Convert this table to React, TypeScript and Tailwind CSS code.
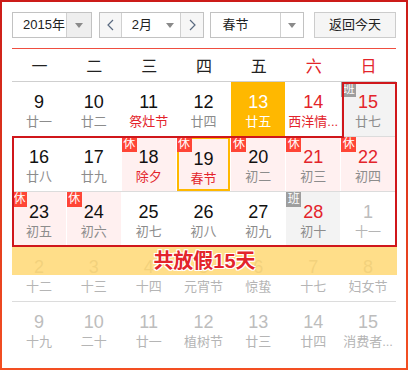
import React from "react";

type Day = {
  n: number;
  l: string;
  red?: boolean;
  lunarRed?: boolean;
  badge?: "休" | "班";
  bg?: "pink" | "gray" | "today";
  selected?: boolean;
  other?: boolean;
};

const weeks: Day[][] = [
  [
    { n: 9, l: "廿一" },
    { n: 10, l: "廿二" },
    { n: 11, l: "祭灶节", lunarRed: true },
    { n: 12, l: "廿四" },
    { n: 13, l: "廿五", bg: "today" },
    { n: 14, l: "西洋情...", red: true, lunarRed: true },
    { n: 15, l: "廿七", red: true, badge: "班", bg: "gray" },
  ],
  [
    { n: 16, l: "廿八" },
    { n: 17, l: "廿九" },
    { n: 18, l: "除夕", lunarRed: true, badge: "休", bg: "pink" },
    { n: 19, l: "春节", lunarRed: true, badge: "休", bg: "pink", selected: true },
    { n: 20, l: "初二", badge: "休", bg: "pink" },
    { n: 21, l: "初三", red: true, badge: "休", bg: "pink" },
    { n: 22, l: "初四", red: true, badge: "休", bg: "pink" },
  ],
  [
    { n: 23, l: "初五", badge: "休", bg: "pink" },
    { n: 24, l: "初六", badge: "休", bg: "pink" },
    { n: 25, l: "初七" },
    { n: 26, l: "初八" },
    { n: 27, l: "初九" },
    { n: 28, l: "初十", red: true, badge: "班", bg: "gray" },
    { n: 1, l: "十一", other: true },
  ],
  [
    { n: 2, l: "十二", other: true },
    { n: 3, l: "十三", other: true },
    { n: 4, l: "十四", other: true },
    { n: 5, l: "元宵节", other: true },
    { n: 6, l: "惊蛰", other: true },
    { n: 7, l: "十七", other: true },
    { n: 8, l: "妇女节", other: true },
  ],
  [
    { n: 9, l: "十九", other: true },
    { n: 10, l: "二十", other: true },
    { n: 11, l: "廿一", other: true },
    { n: 12, l: "植树节", other: true },
    { n: 13, l: "廿三", other: true },
    { n: 14, l: "廿四", other: true },
    { n: 15, l: "消费者...", other: true },
  ],
];

const heads = ["一", "二", "三", "四", "五", "六", "日"];

function Tri() {
  return <span className="w-0 h-0 border-l-[4px] border-r-[4px] border-t-[5px] border-l-transparent border-r-transparent border-t-[#8a8a8a]" />;
}

function Chevron({ right }: { right?: boolean }) {
  return (
    <svg width="7" height="12" viewBox="0 0 7 12">
      <polyline
        points={right ? "1,1 6,6 1,11" : "6,1 1,6 6,11"}
        fill="none"
        stroke="#5a6a80"
        strokeWidth="1.2"
      />
    </svg>
  );
}

function Cell({ d }: { d: Day }) {
  let bg = "";
  if (d.bg === "pink") bg = "bg-[#fff0f0]";
  if (d.bg === "gray") bg = "bg-[#f3f3f3]";
  if (d.bg === "today") bg = "bg-[#ffb800]";
  const numColor = d.bg === "today" ? "text-white" : d.other ? "text-[#bdbdbd]" : d.red ? "text-[#e3242b]" : "text-[#111]";
  const lunarColor = d.bg === "today" ? "text-white" : d.other ? "text-[#b5b5b5]" : d.lunarRed ? "text-[#e3242b]" : "text-[#8c8c8c]";
  return (
    <div className="pr-[1px] h-full">
      <div className={`relative h-full flex flex-col items-center pt-[10px] ${bg} ${d.selected ? "border-2 border-[#ffb800] pt-[8px]" : ""}`}>
        {d.badge && (
          <span
            className={`absolute ${d.selected ? "-top-[2px] -left-[2px]" : "top-0 left-0"} w-[15px] h-[15px] text-[12px] leading-[15px] text-center text-white ${d.badge === "休" ? "bg-[#ff4536]" : "bg-[#9e9e9e]"}`}
          >
            {d.badge}
          </span>
        )}
        <span className={`text-[18px] leading-[20px] ${numColor}`}>{d.n}</span>
        <span className={`mt-[2px] text-[13px] leading-[16px] whitespace-nowrap ${lunarColor}`}>{d.l}</span>
      </div>
    </div>
  );
}

export default function App() {
  return (
    <div
      className="w-[408px] h-[370px] p-[2px] bg-gradient-to-b from-[#cc1b19] to-[#f34f22]"
      style={{ fontFamily: '"Liberation Sans", "Noto Sans CJK SC", sans-serif' }}
    >
      <div className="bg-white h-full px-[10px] pt-[10px]">
        <div className="flex h-[26px] text-[13px] text-[#222] whitespace-nowrap">
          <div className="w-[80px] flex border border-[#c2c2c2]">
            <div className="flex-1 flex items-center pl-[10px]">2015年</div>
            <div className="w-[25px] flex items-center justify-center bg-[#eeeeee] border-l border-[#d0d0d0]">
              <Tri />
            </div>
          </div>
          <div className="w-[106px] ml-[7px] flex border border-[#c2c2c2]">
            <div className="w-[22px] flex items-center justify-center bg-[#f6f6f6] border-r border-[#d0d0d0]">
              <Chevron />
            </div>
            <div className="flex-1 flex items-center pl-[10px] pr-[6px] justify-between">
              <span>2月</span>
              <Tri />
            </div>
            <div className="w-[23px] flex items-center justify-center bg-[#f6f6f6] border-l border-[#d0d0d0]">
              <Chevron right />
            </div>
          </div>
          <div className="w-[94px] ml-[6px] flex border border-[#c2c2c2]">
            <div className="flex-1 flex items-center pl-[11px]">春节</div>
            <div className="w-[23px] flex items-center justify-center border-l border-[#d0d0d0]">
              <Tri />
            </div>
          </div>
          <div className="w-[82px] ml-[10px] flex items-center justify-center border border-[#cccccc] bg-[#f5f5f5]">
            返回今天
          </div>
        </div>

        <div className="mt-[10px] h-px bg-[#ef4e40]" />

        <div className="grid grid-cols-7 h-[33px] pt-[3px] text-[16px] text-[#222] border-b border-[#cfcfcf]">
          {heads.map((h, i) => (
            <div key={h} className={`flex items-center justify-center ${i >= 5 ? "text-[#e3242b]" : ""}`}>
              {h}
            </div>
          ))}
        </div>

        <div className="relative">
          {weeks.map((w, wi) => (
            <div key={wi} className={`grid grid-cols-7 h-[55px] ${wi < 4 ? "border-b border-[#dcdcdc]" : ""}`}>
              {w.map((d, di) => (
                <Cell key={di} d={d} />
              ))}
            </div>
          ))}

          <div className="absolute left-[330px] top-0 w-[55px] h-[56px] border-2 border-b-0 border-[#d0171b] pointer-events-none" />
          <div className="absolute left-0 top-[54px] w-[385px] h-[111px] border-2 border-t-0 border-[#d0171b] pointer-events-none" />
          <div className="absolute left-0 top-[54px] w-[332px] h-[2px] bg-[#d0171b] pointer-events-none" />

          <div className="absolute left-0 top-[165px] w-[385px] h-[28px] bg-[#ffd66b]/80 flex items-center justify-center">
            <span className="text-[20px] font-bold leading-[24px] text-[#e3242b] [text-shadow:-1px_-1px_0_#fff,1px_-1px_0_#fff,-1px_1px_0_#fff,1px_1px_0_#fff,0_1px_0_#fff,0_-1px_0_#fff]">
              共放假15天
            </span>
          </div>
        </div>
      </div>
    </div>
  );
}
